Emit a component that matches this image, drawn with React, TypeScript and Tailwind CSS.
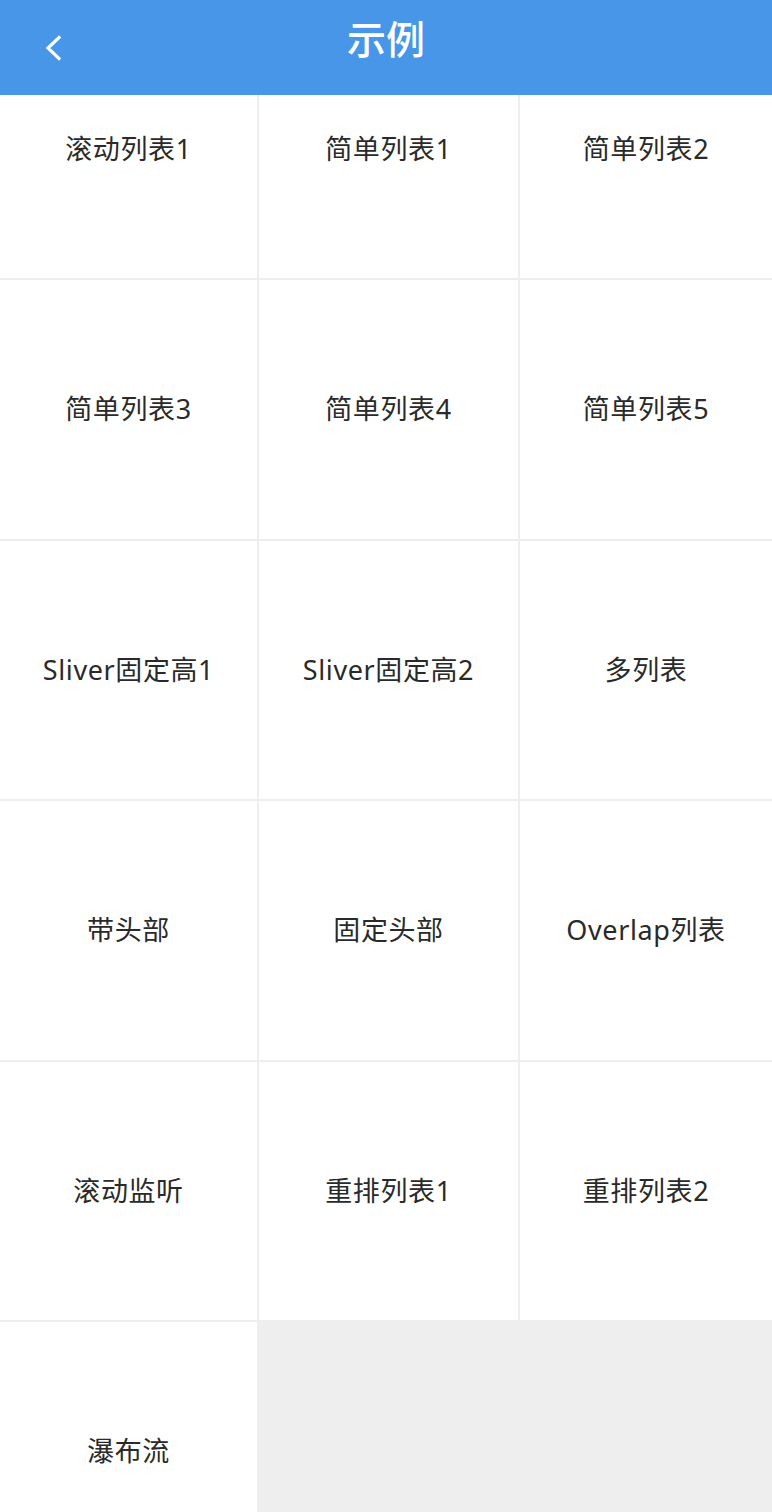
import React from 'react';

const items = [
  '滚动列表1',
  '简单列表1',
  '简单列表2',
  '简单列表3',
  '简单列表4',
  '简单列表5',
  'Sliver固定高1',
  'Sliver固定高2',
  '多列表',
  '带头部',
  '固定头部',
  'Overlap列表',
  '滚动监听',
  '重排列表1',
  '重排列表2',
  '瀑布流',
];

const font = { fontFamily: '"Noto Sans", "Noto Sans CJK SC", sans-serif' };

const App = () => {
  return (
    <div className="w-[772px] h-[1512px] flex flex-col bg-[#eeeeee] overflow-hidden" style={font}>
      <header className="h-[95px] shrink-0 bg-[#4796e8] flex items-center relative z-10">
        <button className="w-[108px] h-full flex items-center pl-[44px]">
          <svg width="20" height="28" viewBox="0 0 20 28" fill="none">
            <path d="M15 3.5 L4 14 L15 24.5" stroke="white" strokeWidth="3.2" strokeLinecap="square" />
          </svg>
        </button>
        <h1 className="flex-1 text-center text-white text-[39px] font-medium pr-[108px] -mt-[16px]">示例</h1>
      </header>
      <div className="flex-1 overflow-hidden">
        <div className="grid grid-cols-[257px_259px_1fr] auto-rows-[258.5px] gap-[2px] -mt-[75.5px]">
          {items.map((label) => (
            <div key={label} className="bg-white flex items-center justify-center text-[27px] tracking-[0.6px] text-[#2a2a2a]">
              {label}
            </div>
          ))}
        </div>
      </div>
    </div>
  );
};

export default App;
